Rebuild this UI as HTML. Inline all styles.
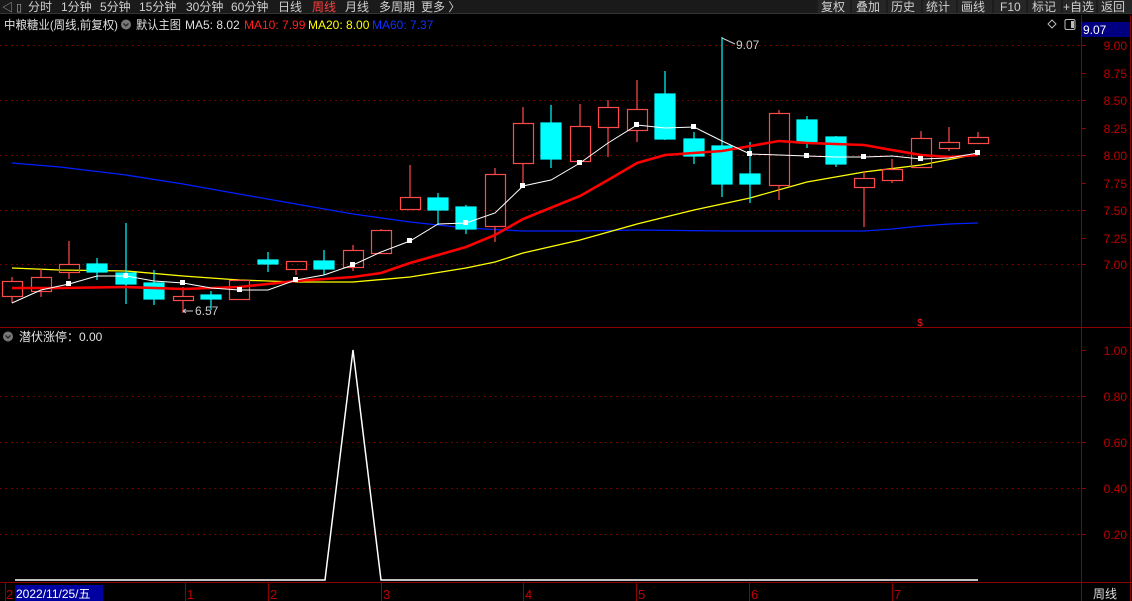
<!DOCTYPE html><html><head><meta charset="utf-8"><style>
body{margin:0;width:1132px;height:601px;background:#000;overflow:hidden;font-family:"Liberation Sans","Noto Sans CJK SC",sans-serif}
svg{display:block}
</style></head><body>
<svg width="1132" height="601" xmlns="http://www.w3.org/2000/svg" font-family="Liberation Sans, Noto Sans CJK SC, sans-serif">
<rect width="1132" height="601" fill="#000"/>
<!-- toolbar -->
<rect x="0" y="0" width="1132" height="13" fill="#1a1a1a"/>
<rect x="816" y="0" width="316" height="13" fill="#262626"/>
<g stroke="#111" stroke-width="1"><line x1="817" y1="0" x2="817" y2="13"/><line x1="851" y1="0" x2="851" y2="13"/><line x1="887" y1="0" x2="887" y2="13"/><line x1="922" y1="0" x2="922" y2="13"/><line x1="957" y1="0" x2="957" y2="13"/><line x1="993" y1="0" x2="993" y2="13"/><line x1="1027" y1="0" x2="1027" y2="13"/><line x1="1062" y1="0" x2="1062" y2="13"/><line x1="1097" y1="0" x2="1097" y2="13"/></g>
<line x1="0" y1="13.5" x2="1132" y2="13.5" stroke="#333"/>
<text x="2" y="11" font-size="11" fill="#aaa">◁ ▯</text>
<g font-size="12" fill="#d0d0d0">
<text x="28" y="11">分时</text><text x="61" y="11">1分钟</text><text x="100" y="11">5分钟</text><text x="139" y="11">15分钟</text><text x="186" y="11">30分钟</text><text x="231" y="11">60分钟</text><text x="278" y="11">日线</text><text x="312" y="11" fill="#ff4040">周线</text><text x="345" y="11">月线</text><text x="379" y="11">多周期</text><text x="421" y="11">更多 〉</text>
<text x="821" y="11">复权</text><text x="856" y="11">叠加</text><text x="891" y="11">历史</text><text x="926" y="11">统计</text><text x="961" y="11">画线</text><text x="1000" y="11">F10</text><text x="1032" y="11">标记</text><text x="1063" y="11">+自选</text><text x="1101" y="11">返回</text>
</g>
<!-- legend -->
<g font-size="12">
<text x="4" y="29" fill="#e0e0e0" textLength="114" lengthAdjust="spacingAndGlyphs">中粮糖业(周线,前复权)</text>
<circle cx="126" cy="24.5" r="5" fill="#777"/><path d="M123.5 23.5l2.5 2.5 2.5-2.5" stroke="#222" stroke-width="1.3" fill="none"/>
<text x="136" y="29" fill="#e0e0e0" textLength="45" lengthAdjust="spacingAndGlyphs">默认主图</text>
<text x="185" y="29" fill="#e0e0e0">MA5: 8.02</text>
<text x="244" y="29" fill="#ff2020">MA10: 7.99</text>
<text x="308" y="29" fill="#ffff00">MA20: 8.00</text>
<text x="372" y="29" fill="#1030ff">MA60: 7.37</text>
</g>
<path d="M1052 20l4 4-4 4-4-4z" stroke="#bbb" fill="none"/>
<rect x="1065" y="19.5" width="10" height="10" rx="1.5" stroke="#bbb" fill="none"/><rect x="1071" y="21" width="3" height="7" fill="#bbb"/>
<!-- axes -->
<g stroke="#8b0000" fill="none">
<line x1="1081.5" y1="15" x2="1081.5" y2="601"/>
<line x1="1130.5" y1="15" x2="1130.5" y2="601"/>
<line x1="0" y1="327.5" x2="1132" y2="327.5"/>
<line x1="0" y1="582.5" x2="1132" y2="582.5"/>
</g>
<g stroke="#8b0000" stroke-dasharray="1.5,4" stroke-width="1">
<line x1="0" y1="45.5" x2="1081" y2="45.5"/><line x1="0" y1="100.5" x2="1081" y2="100.5"/><line x1="0" y1="155.5" x2="1081" y2="155.5"/><line x1="0" y1="210.5" x2="1081" y2="210.5"/><line x1="0" y1="264.5" x2="1081" y2="264.5"/>
<line x1="0" y1="396.5" x2="1081" y2="396.5"/><line x1="0" y1="442.5" x2="1081" y2="442.5"/><line x1="0" y1="488.5" x2="1081" y2="488.5"/><line x1="0" y1="534.5" x2="1081" y2="534.5"/>
</g>
<g stroke="#8b0000">
<line x1="1081" y1="45.5" x2="1086" y2="45.5"/><line x1="1081" y1="73.5" x2="1086" y2="73.5"/><line x1="1081" y1="100.5" x2="1086" y2="100.5"/><line x1="1081" y1="128.5" x2="1086" y2="128.5"/><line x1="1081" y1="155.5" x2="1086" y2="155.5"/><line x1="1081" y1="183.5" x2="1086" y2="183.5"/><line x1="1081" y1="210.5" x2="1086" y2="210.5"/><line x1="1081" y1="238.5" x2="1086" y2="238.5"/><line x1="1081" y1="264.5" x2="1086" y2="264.5"/>
<line x1="1081" y1="350.5" x2="1086" y2="350.5"/><line x1="1081" y1="396.5" x2="1086" y2="396.5"/><line x1="1081" y1="442.5" x2="1086" y2="442.5"/><line x1="1081" y1="488.5" x2="1086" y2="488.5"/><line x1="1081" y1="534.5" x2="1086" y2="534.5"/>
</g>
<g font-size="12" fill="#c00000" text-anchor="end">
<text x="1127" y="50">9.00</text><text x="1127" y="78">8.75</text><text x="1127" y="105">8.50</text><text x="1127" y="133">8.25</text><text x="1127" y="160">8.00</text><text x="1127" y="188">7.75</text><text x="1127" y="215">7.50</text><text x="1127" y="243">7.25</text><text x="1127" y="269">7.00</text>
<text x="1127" y="355">1.00</text><text x="1127" y="401">0.80</text><text x="1127" y="447">0.60</text><text x="1127" y="493">0.40</text><text x="1127" y="539">0.20</text>
</g>
<rect x="1082" y="22" width="48" height="15" fill="#000080"/>
<text x="1083" y="34" font-size="12" fill="#fff">9.07</text>
<!-- MA60 -->
<polyline fill="none" stroke="#0020ff" stroke-width="1.3" points="12,163 60,167 126,175 183,184 239,194 296,204 353,214 410,222 466,228 523,231 580,231 637,230 722,231 807,231 864,231 892,229 921,226 949,224 978,223"/>
<!-- MA20 -->
<polyline fill="none" stroke="#ffff00" stroke-width="1.3" points="12,268 60,270 126,271 183,276 239,280 296,282 353,282 410,277 466,268 495,262 523,253 580,240 637,224 694,210 750,198 807,182 864,172 921,165 978,154"/>
<!-- candles -->
<g stroke="#ff4a4a" stroke-width="1.2" fill="none">
<path d="M12 277V281M12 296V303M41 269V277M41 291V297M69 241V264M69 272V279M183 287V296M183 300V313M239 279V280M296 261V261M296 269V275M353 245V250M353 267V271M381 229V230M410 165V197M495 168V174M495 226V242M523 107V123M523 163V187M580 104V126M608 100V107M608 127V157M637 80V109M637 130V142M779 110V113M779 185V200M864 171V178M864 187V227M892 159V169M892 180V183M921 131V138M921 167V168M949 127V142M949 148V151M978 132V137"/>
<rect x="2.5" y="281.5" width="20" height="15"/><rect x="31.5" y="277.5" width="20" height="14"/><rect x="59.5" y="264.5" width="20" height="8"/><rect x="173.5" y="296.5" width="20" height="4"/><rect x="229.5" y="280.5" width="20" height="19"/><rect x="286.5" y="261.5" width="20" height="8"/><rect x="343.5" y="250.5" width="20" height="17"/><rect x="371.5" y="230.5" width="20" height="23"/><rect x="400.5" y="197.5" width="20" height="12"/><rect x="485.5" y="174.5" width="20" height="52"/><rect x="513.5" y="123.5" width="20" height="40"/><rect x="570.5" y="126.5" width="20" height="35"/><rect x="598.5" y="107.5" width="20" height="20"/><rect x="627.5" y="109.5" width="20" height="21"/><rect x="769.5" y="113.5" width="20" height="72"/><rect x="854.5" y="178.5" width="20" height="9"/><rect x="882.5" y="169.5" width="20" height="11"/><rect x="911.5" y="138.5" width="20" height="29"/><rect x="939.5" y="142.5" width="20" height="6"/><rect x="968.5" y="137.5" width="20" height="6"/>
</g>
<g stroke="#00ffff" stroke-width="1.2" fill="#00ffff">
<path d="M97 258V280M126 223V304M154 270V305M211 291V310M268 252V272M324 250V275M438 193V225M466 205V234M551 105V168M665 71V140M694 132V164M722 37V197M750 142V203M807 116V148M836 136V167"/>
<rect x="87" y="264" width="20" height="8"/><rect x="116" y="273" width="20" height="11"/><rect x="144" y="283" width="20" height="16"/><rect x="201" y="295" width="20" height="4"/><rect x="258" y="260" width="20" height="4"/><rect x="314" y="261" width="20" height="8"/><rect x="428" y="198" width="20" height="12"/><rect x="456" y="207" width="20" height="22"/><rect x="541" y="123" width="20" height="36"/><rect x="655" y="94" width="20" height="45"/><rect x="684" y="139" width="20" height="17"/><rect x="712" y="146" width="20" height="38"/><rect x="740" y="174" width="20" height="10"/><rect x="797" y="120" width="20" height="23"/><rect x="826" y="137" width="20" height="27"/>
</g>
<!-- MA10 -->
<polyline fill="none" stroke="#ff0000" stroke-width="2.6" points="12,288 60,288 126,287 183,289 239,287 296,281 353,277 381,273 410,263 466,247 495,235 523,219 580,196 608,180 637,163 665,155 722,151 779,141 807,143 864,145 892,150 921,155 949,157 978,155"/>
<!-- MA5 -->
<polyline fill="none" stroke="#fff" stroke-width="1" points="12,303 41,290 69,284 97,276 126,276 154,281 183,283 211,288 239,290 268,290 296,280 324,275 353,265 381,252 410,241 438,224 466,223 495,213 523,186 551,180 580,163 608,143 637,125 665,128 694,127 722,141 750,154 779,155 807,156 836,157 864,157 892,156 921,159 949,158 978,153"/>
<g fill="#fff"><rect x="66" y="281" width="5" height="5"/><rect x="123" y="273" width="5" height="5"/><rect x="180" y="280" width="5" height="5"/><rect x="237" y="287" width="5" height="5"/><rect x="293" y="277" width="5" height="5"/><rect x="350" y="262" width="5" height="5"/><rect x="407" y="238" width="5" height="5"/><rect x="463" y="220" width="5" height="5"/><rect x="520" y="183" width="5" height="5"/><rect x="577" y="160" width="5" height="5"/><rect x="634" y="122" width="5" height="5"/><rect x="691" y="124" width="5" height="5"/><rect x="747" y="151" width="5" height="5"/><rect x="804" y="153" width="5" height="5"/><rect x="861" y="154" width="5" height="5"/><rect x="918" y="156" width="5" height="5"/><rect x="975" y="150" width="5" height="5"/></g>
<!-- annotations -->
<path d="M183 311H193M183 311l3-2M183 311l3 2" stroke="#ccc" stroke-width="1"/>
<text x="195" y="315" font-size="12" fill="#ccc">6.57</text>
<path d="M722 38L735 44" stroke="#ccc"/>
<text x="736" y="49" font-size="12" fill="#ccc">9.07</text>
<text x="920" y="326" font-size="10" fill="#ff2020" text-anchor="middle">$</text>
<!-- sub panel -->
<circle cx="8" cy="336.5" r="5" fill="#777"/><path d="M5.5 335.5l2.5 2.5 2.5-2.5" stroke="#222" stroke-width="1.3" fill="none"/>
<text x="19" y="341" font-size="12" fill="#e0e0e0">潜伏涨停：0.00</text>
<polyline fill="none" stroke="#fff" stroke-width="1.5" points="15,580 325,580 353,350 381,580 978,580"/>
<!-- bottom axis -->
<rect x="15" y="585" width="88" height="16" fill="#0000a0"/>
<text x="16" y="598" font-size="12" fill="#fff">2022/11/25/五</text>
<g stroke="#8b0000"><line x1="5.5" y1="583" x2="5.5" y2="601"/><line x1="185.5" y1="583" x2="185.5" y2="601"/><line x1="268.5" y1="583" x2="268.5" y2="601"/><line x1="381.5" y1="583" x2="381.5" y2="601"/><line x1="523.5" y1="583" x2="523.5" y2="601"/><line x1="636.5" y1="583" x2="636.5" y2="601"/><line x1="749.5" y1="583" x2="749.5" y2="601"/><line x1="892.5" y1="583" x2="892.5" y2="601"/></g>
<g font-size="13" fill="#c00000"><text x="6" y="599">2</text><text x="187" y="599">1</text><text x="270" y="599">2</text><text x="383" y="599">3</text><text x="525" y="599">4</text><text x="638" y="599">5</text><text x="751" y="599">6</text><text x="894" y="599">7</text></g>
<text x="1093" y="598" font-size="12" fill="#ddd">周线</text>
</svg>
</body></html>
